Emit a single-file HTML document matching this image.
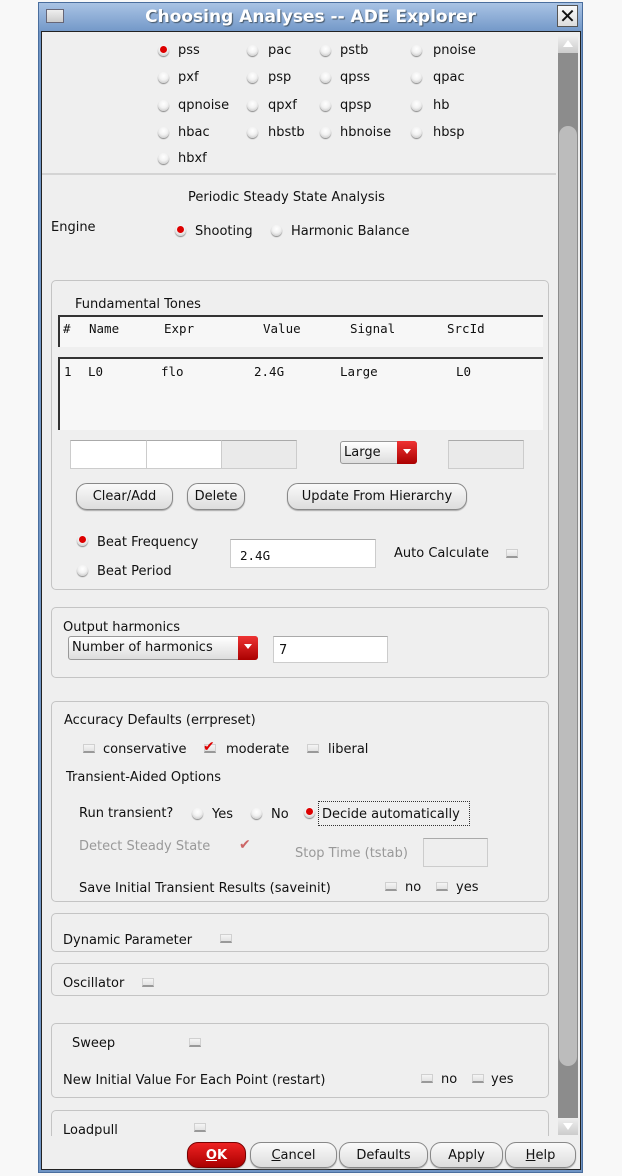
<!DOCTYPE html>
<html><head><meta charset="utf-8">
<style>
*{margin:0;padding:0;box-sizing:border-box}
body{width:622px;height:1176px;background:#f8f8f8;position:relative;overflow:hidden;font-family:"DejaVu Sans","Liberation Sans",sans-serif;font-size:13px;color:#111}
.a{position:absolute}
.t{position:absolute;white-space:nowrap;line-height:16px;transform:translateY(-7px)}
.m{font-family:"DejaVu Sans Mono","Liberation Mono",monospace;font-size:12.5px}
.g{color:#999}
.r{position:absolute;width:11px;height:11px;border-radius:50%;background:radial-gradient(circle at 50% 35%,#fff 0,#f2f2f2 45%,#bbb 100%);box-shadow:0 1px 1px #888;transform:translate(-5px,-5px)}
.r.on::after{content:"";position:absolute;left:2px;top:1px;width:7px;height:7px;border-radius:50%;background:#d00}
.c{position:absolute;width:12px;height:9px;background:linear-gradient(#f4f4f4,#e2e2e2);border:1px solid #d0d0d0;border-bottom:2px solid #999;transform:translate(-6px,-4px)}
.box{position:absolute;border:1px solid #c4c4c4;border-radius:5px;left:51px;width:498px}
.in{position:absolute;background:#fff;border:1px solid #ccc;border-top:1px solid #aaa}
.btn{position:absolute;border:1px solid #888;border-radius:11px;background:linear-gradient(#fafafa,#ddd);text-align:center;line-height:26px;font-size:13px;box-shadow:0 1px 1px #aaa}
.dd{position:absolute;border:1px solid #999;border-radius:3px;background:linear-gradient(#fff,#ddd);line-height:22px;padding-left:3px;font-size:13px}
.dd i{position:absolute;right:-1px;top:-1px;bottom:-1px;width:20px;background:linear-gradient(#e33,#a00);border-radius:0 3px 3px 0}
.dd i::after{content:"";position:absolute;left:6px;top:8px;border:4px solid transparent;border-top:5px solid #fff}
</style></head><body>
<div class="a" style="left:38px;top:2px;width:545px;height:1171px;background:#6f94c4;border:1px solid #4a6e9e"></div>
<div class="a" style="left:39px;top:3px;width:543px;height:28px;background:linear-gradient(#a9c3e4,#7499c9)"></div>
<div class="a" style="left:46px;top:9px;width:18px;height:14px;background:linear-gradient(#eee,#ccc);border:1px solid #667"></div>
<div class="a" style="left:38px;top:3px;width:545px;text-align:center;font:bold 17px 'DejaVu Sans',sans-serif;color:#fff;line-height:28px;text-shadow:1px 1px 1px #456">Choosing Analyses -- ADE Explorer</div>
<div class="a" style="left:557px;top:5px;width:21px;height:22px;background:linear-gradient(#fafafa,#ddd);border:1px solid #555;font:20px 'DejaVu Sans';line-height:20px;text-align:center">✕</div>
<div class="a" style="left:41px;top:31px;width:540px;height:1139px;background:#efefef;border:1px solid #222"></div>
<div class="a" style="left:558px;top:36px;width:20px;height:1099px;background:#8c8c8c"></div>
<div class="a" style="left:558px;top:36px;width:20px;height:17px;background:linear-gradient(#eee,#ccc)"></div>
<div class="a" style="left:563px;top:40px;border:5px solid transparent;border-bottom:7px solid #fff;border-top:0"></div>
<div class="a" style="left:559px;top:126px;width:18px;height:940px;background:#bcbcbc;border-radius:9px"></div>
<div class="a" style="left:558px;top:1118px;width:20px;height:17px;background:linear-gradient(#eee,#ccc)"></div>
<div class="a" style="left:563px;top:1123px;border:5px solid transparent;border-top:7px solid #fff;border-bottom:0"></div>

<div class="r on" style="left:163px;top:50px"></div><div class="t" style="left:178px;top:50px">pss</div>
<div class="r" style="left:252px;top:50px"></div><div class="t" style="left:268px;top:50px">pac</div>
<div class="r" style="left:325px;top:50px"></div><div class="t" style="left:340px;top:50px">pstb</div>
<div class="r" style="left:416px;top:50px"></div><div class="t" style="left:433px;top:50px">pnoise</div>
<div class="r" style="left:163px;top:77px"></div><div class="t" style="left:178px;top:77px">pxf</div>
<div class="r" style="left:252px;top:77px"></div><div class="t" style="left:268px;top:77px">psp</div>
<div class="r" style="left:325px;top:77px"></div><div class="t" style="left:340px;top:77px">qpss</div>
<div class="r" style="left:416px;top:77px"></div><div class="t" style="left:433px;top:77px">qpac</div>
<div class="r" style="left:163px;top:105px"></div><div class="t" style="left:178px;top:105px">qpnoise</div>
<div class="r" style="left:252px;top:105px"></div><div class="t" style="left:268px;top:105px">qpxf</div>
<div class="r" style="left:325px;top:105px"></div><div class="t" style="left:340px;top:105px">qpsp</div>
<div class="r" style="left:416px;top:105px"></div><div class="t" style="left:433px;top:105px">hb</div>
<div class="r" style="left:163px;top:132px"></div><div class="t" style="left:178px;top:132px">hbac</div>
<div class="r" style="left:252px;top:132px"></div><div class="t" style="left:268px;top:132px">hbstb</div>
<div class="r" style="left:325px;top:132px"></div><div class="t" style="left:340px;top:132px">hbnoise</div>
<div class="r" style="left:416px;top:132px"></div><div class="t" style="left:433px;top:132px">hbsp</div>
<div class="r" style="left:163px;top:158px"></div><div class="t" style="left:178px;top:158px">hbxf</div>
<div class="a" style="left:42px;top:173px;width:514px;height:2px;background:#d4d4d4"></div>

<div class="t" style="left:188px;top:197px">Periodic Steady State Analysis</div>
<div class="t" style="left:51px;top:227px">Engine</div>
<div class="r on" style="left:180px;top:230px"></div><div class="t" style="left:195px;top:231px">Shooting</div>
<div class="r" style="left:276px;top:230px"></div><div class="t" style="left:291px;top:231px">Harmonic Balance</div>

<div class="box" style="top:280px;height:310px"></div>
<div class="t" style="left:75px;top:304px">Fundamental Tones</div>
<div class="a" style="left:58px;top:315px;width:485px;height:32px;background:#f7f7f7;border-top:2px solid #333;border-left:2px solid #333"></div>
<div class="t m" style="left:63px;top:328px">#</div>
<div class="t m" style="left:89px;top:328px">Name</div>
<div class="t m" style="left:164px;top:328px">Expr</div>
<div class="t m" style="left:263px;top:328px">Value</div>
<div class="t m" style="left:350px;top:328px">Signal</div>
<div class="t m" style="left:447px;top:328px">SrcId</div>
<div class="a" style="left:58px;top:357px;width:485px;height:73px;background:#f7f7f7;border-top:2px solid #333;border-left:2px solid #333"></div>
<div class="t m" style="left:64px;top:371px">1</div>
<div class="t m" style="left:88px;top:371px">L0</div>
<div class="t m" style="left:161px;top:371px">flo</div>
<div class="t m" style="left:254px;top:371px">2.4G</div>
<div class="t m" style="left:340px;top:371px">Large</div>
<div class="t m" style="left:456px;top:371px">L0</div>
<div class="in" style="left:70px;top:440px;width:77px;height:29px"></div>
<div class="in" style="left:146px;top:440px;width:76px;height:29px"></div>
<div class="in" style="left:221px;top:440px;width:76px;height:29px;background:#eaeaea"></div>
<div class="dd" style="left:340px;top:441px;width:77px;height:23px">Large<i></i></div>
<div class="in" style="left:448px;top:440px;width:76px;height:29px;background:#eaeaea"></div>
<div class="btn" style="left:76px;top:483px;width:97px;height:27px">Clear/Add</div>
<div class="btn" style="left:187px;top:483px;width:58px;height:27px">Delete</div>
<div class="btn" style="left:287px;top:483px;width:180px;height:27px">Update From Hierarchy</div>
<div class="r on" style="left:82px;top:540px"></div><div class="t" style="left:97px;top:542px">Beat Frequency</div>
<div class="r" style="left:82px;top:570px"></div><div class="t" style="left:97px;top:571px">Beat Period</div>
<div class="in" style="left:230px;top:539px;width:146px;height:29px"></div>
<div class="t m" style="left:240px;top:555px">2.4G</div>
<div class="t" style="left:394px;top:553px">Auto Calculate</div>
<div class="c" style="left:512px;top:553px"></div>

<div class="box" style="top:607px;height:71px"></div>
<div class="t" style="left:63px;top:627px">Output harmonics</div>
<div class="dd" style="left:68px;top:636px;width:190px;height:24px">Number of harmonics<i></i></div>
<div class="in" style="left:273px;top:636px;width:115px;height:27px"></div>
<div class="t" style="left:279px;top:650px">7</div>

<div class="box" style="top:701px;height:201px"></div>
<div class="t" style="left:64px;top:720px">Accuracy Defaults (errpreset)</div>
<div class="c" style="left:89px;top:748px"></div><div class="t" style="left:103px;top:749px">conservative</div>
<div class="c" style="left:210px;top:748px"></div><div class="t" style="left:203px;top:746px;color:#d00;font-size:14px;font-weight:bold">✔</div><div class="t" style="left:226px;top:749px">moderate</div>
<div class="c" style="left:313px;top:748px"></div><div class="t" style="left:328px;top:749px">liberal</div>
<div class="t" style="left:66px;top:777px">Transient-Aided Options</div>
<div class="t" style="left:79px;top:813px">Run transient?</div>
<div class="r" style="left:197px;top:813px"></div><div class="t" style="left:212px;top:814px">Yes</div>
<div class="r" style="left:256px;top:813px"></div><div class="t" style="left:271px;top:814px">No</div>
<div class="r on" style="left:309px;top:812px"></div>
<div class="a" style="left:318px;top:801px;width:152px;height:25px;border:1px dotted #333"></div>
<div class="t" style="left:322px;top:814px">Decide automatically</div>
<div class="t g" style="left:79px;top:846px">Detect Steady State</div>
<div class="t" style="left:239px;top:844px;color:#c66;font-size:14px">✔</div>
<div class="t g" style="left:295px;top:853px">Stop Time (tstab)</div>
<div class="in" style="left:423px;top:838px;width:65px;height:29px;background:#eee"></div>
<div class="t" style="left:79px;top:888px">Save Initial Transient Results (saveinit)</div>
<div class="c" style="left:391px;top:886px"></div><div class="t" style="left:405px;top:887px">no</div>
<div class="c" style="left:442px;top:886px"></div><div class="t" style="left:456px;top:887px">yes</div>

<div class="box" style="top:913px;height:39px"></div>
<div class="t" style="left:63px;top:940px">Dynamic Parameter</div><div class="c" style="left:226px;top:938px"></div>
<div class="box" style="top:963px;height:33px"></div>
<div class="t" style="left:63px;top:983px">Oscillator</div><div class="c" style="left:148px;top:982px"></div>
<div class="box" style="top:1023px;height:75px"></div>
<div class="t" style="left:72px;top:1043px">Sweep</div><div class="c" style="left:195px;top:1042px"></div>
<div class="t" style="left:63px;top:1080px">New Initial Value For Each Point (restart)</div>
<div class="c" style="left:427px;top:1078px"></div><div class="t" style="left:441px;top:1079px">no</div>
<div class="c" style="left:478px;top:1078px"></div><div class="t" style="left:491px;top:1079px">yes</div>
<div class="a" style="left:51px;top:1110px;width:498px;height:30px;border:1px solid #c4c4c4;border-bottom:none;border-radius:5px 5px 0 0"></div>
<div class="t" style="left:63px;top:1130px">Loadpull</div><div class="c" style="left:200px;top:1127px"></div>
<div class="a" style="left:42px;top:1136px;width:538px;height:33px;background:#efefef"></div>

<div class="btn" style="left:187px;top:1142px;width:59px;height:26px;background:linear-gradient(#e22,#a00);border-color:#700;color:#fff;font-weight:bold"><u>O</u>K</div>
<div class="btn" style="left:250px;top:1142px;width:87px;height:26px"><u>C</u>ancel</div>
<div class="btn" style="left:339px;top:1142px;width:89px;height:26px">Defaults</div>
<div class="btn" style="left:430px;top:1142px;width:73px;height:26px">Apply</div>
<div class="btn" style="left:505px;top:1142px;width:71px;height:26px"><u>H</u>elp</div>
</body></html>
